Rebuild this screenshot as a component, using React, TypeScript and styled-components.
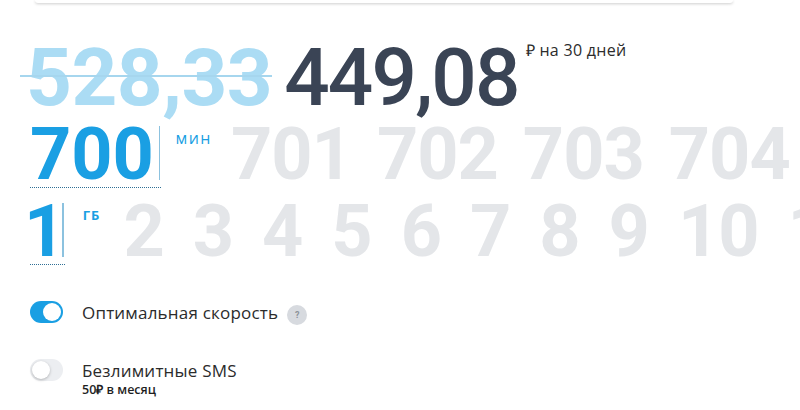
import React from "react";
import styled, { createGlobalStyle } from "styled-components";

const Global = createGlobalStyle`
  html, body { margin: 0; padding: 0; background: #fff; }
  body { font-family: Roboto, "Noto Sans", sans-serif; }
`;

const Page = styled.div`
  width: 800px;
  height: 410px;
  overflow: hidden;
  background: #fff;
`;

const TopCard = styled.div`
  margin: 0 67px 0 35px;
  height: 3px;
  background: #fff;
  border-radius: 0 0 6px 6px;
  box-shadow: 0 1px 3px rgba(0, 0, 0, 0.2);
`;

const Content = styled.div`
  padding-left: 30px;
  display: flex;
  flex-direction: column;
`;

const PriceRow = styled.div`
  display: flex;
  align-items: flex-start;
  margin-top: 35px;
  white-space: nowrap;
`;

const OldPrice = styled.div`
  position: relative;
  margin-left: -4px;
  font-size: 80px;
  font-weight: 700;
  line-height: 80px;
  letter-spacing: -0.5px;
  color: #abdcf4;
  &::after {
    content: "";
    position: absolute;
    left: -6px;
    right: 0;
    top: 37px;
    height: 2px;
    background: #a6d6ee;
  }
`;

const NewPrice = styled.div`
  margin-left: 12px;
  font-size: 80px;
  font-weight: 500;
  line-height: 80px;
  letter-spacing: -1.8px;
  color: #3a4455;
`;

const Period = styled.div`
  margin-left: 7px;
  margin-top: 2px;
  font-family: "Open Sans", sans-serif;
  font-size: 16px;
  line-height: 20px;
  letter-spacing: 0.3px;
  color: #2c2c2c;
`;

const SelectorRow = styled.div<{ $top: number }>`
  display: flex;
  align-items: flex-start;
  margin-top: ${(p) => p.$top}px;
  white-space: nowrap;
`;

const Selected = styled.div`
  display: flex;
  align-items: flex-start;
  border-bottom: 1px dotted #2f6f95;
  padding-bottom: 2px;
  padding-right: 1px;
`;

const Value = styled.div<{ $shift?: number }>`
  font-size: 72px;
  font-weight: 700;
  line-height: 60px;
  color: #1a9fe3;
  margin-left: ${(p) => p.$shift ?? 0}px;
`;

const Divider = styled.div<{ $gap: number }>`
  width: 1.5px;
  height: 54px;
  margin-top: 1px;
  margin-left: ${(p) => p.$gap}px;
  background: #8cc2df;
`;

const Unit = styled.div<{ $gap: number; $small?: boolean }>`
  margin-left: ${(p) => p.$gap}px;
  margin-top: ${(p) => (p.$small ? 4 : 2)}px;
  font-family: "Open Sans", sans-serif;
  font-size: ${(p) => (p.$small ? 13 : 16)}px;
  font-weight: ${(p) => (p.$small ? 700 : 400)};
  letter-spacing: ${(p) => (p.$small ? 1 : 1.5)}px;
  color: #1a9fe3;
`;

const Options = styled.div<{ $gap: number; $spacing: number }>`
  display: flex;
  gap: ${(p) => p.$spacing}px;
  margin-left: ${(p) => p.$gap}px;
`;

const Option = styled.div`
  font-size: 72px;
  font-weight: 700;
  line-height: 60px;
  letter-spacing: -1px;
  color: #e4e6e9;
`;

const Toggles = styled.div`
  display: flex;
  flex-direction: column;
  gap: 36px;
  margin-top: 36px;
`;

const ToggleRow = styled.div`
  display: flex;
  align-items: flex-start;
  gap: 19px;
`;

const Switch = styled.div<{ $on: boolean }>`
  flex: none;
  width: 33px;
  height: 22px;
  border-radius: 11px;
  background: ${(p) => (p.$on ? "#1a9fe3" : "#eceef1")};
  display: flex;
  align-items: center;
  justify-content: ${(p) => (p.$on ? "flex-end" : "flex-start")};
  padding: 0 2px;
  box-sizing: border-box;
`;

const Knob = styled.div<{ $on: boolean }>`
  width: 18px;
  height: 18px;
  border-radius: 50%;
  background: #fff;
  box-shadow: ${(p) => (p.$on ? "none" : "0 1px 3px rgba(0,0,0,0.25)")};
`;

const TextCol = styled.div`
  display: flex;
  flex-direction: column;
`;

const LabelLine = styled.div`
  display: flex;
  align-items: center;
  height: 22px;
`;

const Label = styled.span`
  font-family: "Open Sans", sans-serif;
  font-size: 17px;
  letter-spacing: 0.2px;
  color: #2b2b2b;
`;

const Help = styled.span`
  margin-left: 9px;
  margin-top: 5px;
  width: 20px;
  height: 20px;
  border-radius: 50%;
  background: #d7dadf;
  color: #8d9299;
  font-size: 9px;
  font-weight: 700;
  display: flex;
  align-items: center;
  justify-content: center;
`;

const Sub = styled.div`
  font-family: "Open Sans", sans-serif;
  font-size: 12.5px;
  font-weight: 600;
  color: #1f1f1f;
`;

const minutes = ["701", "702", "703", "704"];
const gbs = ["2", "3", "4", "5", "6", "7", "8", "9", "10", "11"];

export default function App() {
  return (
    <Page>
      <Global />
      <TopCard />
      <Content>
        <PriceRow>
          <OldPrice>528,33</OldPrice>
          <NewPrice>449,08</NewPrice>
          <Period>₽ на 30 дней</Period>
        </PriceRow>

        <SelectorRow $top={7}>
          <Selected>
            <Value>700</Value>
            <Divider $gap={5} />
          </Selected>
          <Unit $gap={14}>мин</Unit>
          <Options $gap={19} $spacing={25}>
            {minutes.map((m) => (
              <Option key={m}>{m}</Option>
            ))}
          </Options>
        </SelectorRow>

        <SelectorRow $top={14}>
          <Selected>
            <Value $shift={-6}>1</Value>
            <Divider $gap={-3} />
          </Selected>
          <Unit $gap={18} $small>
            ГБ
          </Unit>
          <Options $gap={23} $spacing={29}>
            {gbs.map((g) => (
              <Option key={g}>{g}</Option>
            ))}
          </Options>
        </SelectorRow>

        <Toggles>
          <ToggleRow>
            <Switch $on>
              <Knob $on />
            </Switch>
            <TextCol>
              <LabelLine>
                <Label>Оптимальная скорость</Label>
                <Help>?</Help>
              </LabelLine>
            </TextCol>
          </ToggleRow>
          <ToggleRow>
            <Switch $on={false}>
              <Knob $on={false} />
            </Switch>
            <TextCol>
              <LabelLine>
                <Label>Безлимитные SMS</Label>
              </LabelLine>
              <Sub>50₽ в месяц</Sub>
            </TextCol>
          </ToggleRow>
        </Toggles>
      </Content>
    </Page>
  );
}
